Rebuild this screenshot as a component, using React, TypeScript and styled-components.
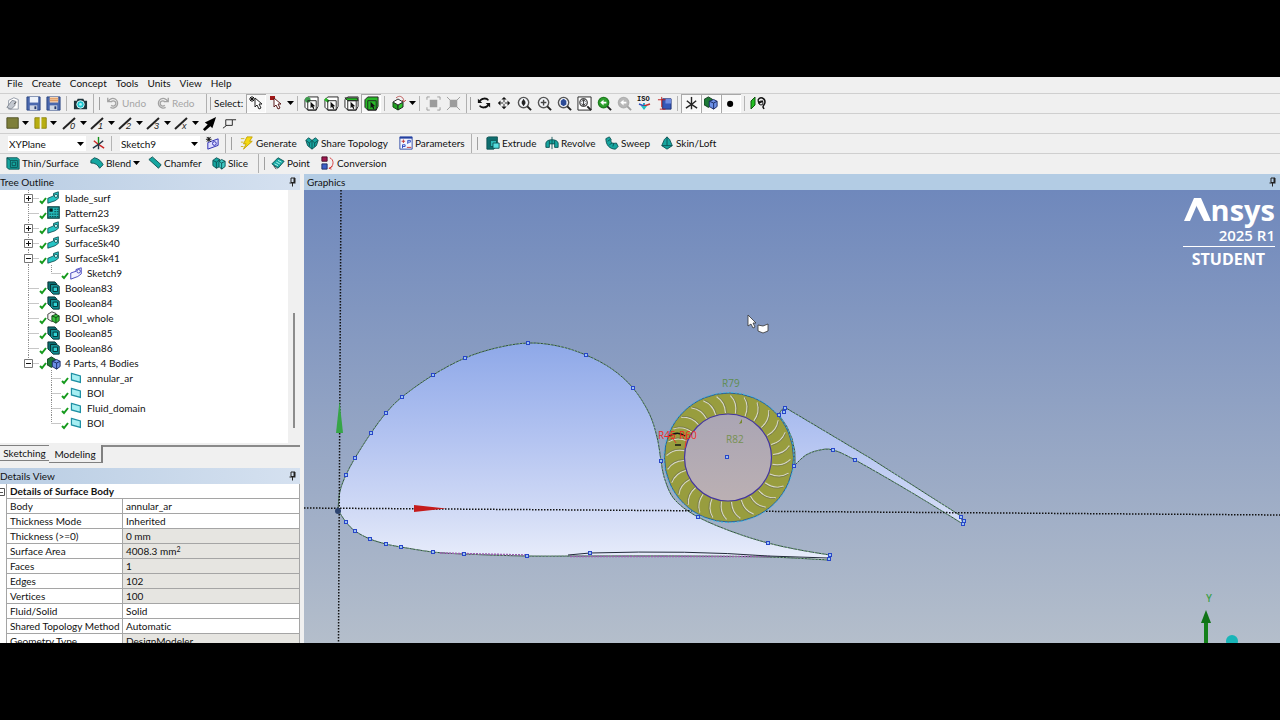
import React from "react";
import styled, { createGlobalStyle, css } from "styled-components";

const GlobalStyle = createGlobalStyle`
  * { box-sizing: border-box; }
  body {
    margin: 0;
    background: #000;
    color: #111;
    font-family: Lato, "Open Sans", sans-serif;
    font-size: 10px;
    line-height: 14px;
    font-variant-ligatures: none;
  }
  button, select, input { font: inherit; font-variant-ligatures: none; color: inherit; }
`;

const Page = styled.div`
  height: 100vh;
  padding: 77px 0;
  background: #000;
  overflow: hidden;
`;

const Window = styled.div`
  display: flex;
  flex-direction: column;
  height: 100%;
  background: #f0f0f0;
  overflow: hidden;
`;

/* ---------- menu and toolbars ---------- */

const MenuBar = styled.nav`
  display: flex;
  align-items: flex-start;
  gap: 9px;
  height: 16px;
  padding: 0 7px;
  flex: none;
`;

const MenuItem = styled.button`
  border: 0;
  padding: 0;
  background: none;
  line-height: 13px;
`;

const ToolRow = styled.div`
  display: flex;
  align-items: stretch;
  height: 20px;
  padding-left: 3px;
  flex: none;
  border-top: 1px solid #cfcfcf;
  white-space: nowrap;
`;

const ToolButton = styled.button<{ $w?: number; $inset?: boolean; $dim?: boolean }>`
  display: flex;
  align-items: center;
  justify-content: ${(p) => (p.$w ? "flex-start" : "center")};
  gap: 2px;
  width: ${(p) => p.$w ?? 20}px;
  padding: 0 0 1px ${(p) => (p.$w ? 3 : 0)}px;
  border: 0;
  background: none;
  flex: none;
  ${(p) => p.$dim && css`color: #a6a6a6;`}
  ${(p) =>
    p.$inset &&
    css`
      background: #f8f8f8;
      box-shadow: inset 1px 1px 0 #a8a8a8, inset -1px -1px 0 #fff;
    `}
  svg { flex: none; }
`;

const Divider = styled.span<{ $w?: number }>`
  width: ${(p) => p.$w ?? 7}px;
  margin: 2px 0;
  flex: none;
  background: linear-gradient(#b4b4b4, #b4b4b4) center / 1px 100% no-repeat;
`;

const BandEdge = styled.span<{ $w?: number; $after?: number }>`
  display: flex;
  width: ${(p) => p.$w ?? 7}px;
  margin: 0 ${(p) => p.$after ?? 3}px 0 3px;
  flex: none;
  border-left: 1px solid #b0b0b0;
  &::after {
    content: "";
    width: 1px;
    margin: 3px 0 3px auto;
    background: #a0a0a0;
  }
`;

const ToolLabel = styled.span`
  display: flex;
  align-items: center;
  width: 32px;
  padding-bottom: 1px;
`;

const Picker = styled.label<{ $w: number }>`
  position: relative;
  display: flex;
  width: ${(p) => p.$w}px;
  margin: 2px 2px 2px 5px;
  background: #fff;
  flex: none;
  select {
    appearance: none;
    width: 100%;
    border: 0;
    padding: 0 1px;
    background: none;
    line-height: 14px;
  }
  svg {
    position: absolute;
    right: 2px;
    top: 4px;
    pointer-events: none;
  }
`;

/* ---------- work area ---------- */

const Work = styled.div`
  display: flex;
  flex: 1;
  min-height: 0;
  margin-top: 1px;
`;

const Side = styled.aside`
  display: flex;
  flex-direction: column;
  width: 304px;
  padding-right: 4px;
  flex: none;
`;

const PanelHead = styled.header<{ $pad?: number }>`
  display: flex;
  justify-content: space-between;
  align-items: center;
  height: 16px;
  padding: 0 3px 0 ${(p) => p.$pad ?? 0}px;
  flex: none;
  background: linear-gradient(90deg, #b9cde3, #d5e1f0);
  h2 {
    margin: 0;
    font-size: 10px;
    font-weight: 400;
  }
`;

const TreeBox = styled.div`
  display: flex;
  flex: 1;
  min-height: 0;
  background: #fff;
`;

const TreeList = styled.ul`
  flex: 1;
  margin: 0;
  padding: 0;
  list-style: none;
  overflow: hidden;
`;

const TreeRow = styled.li`
  display: flex;
  align-items: center;
  height: 15px;
  svg { flex: none; }
  span { margin-left: 4px; white-space: nowrap; }
`;

const IconSlot = styled.i`
  display: flex;
  width: 14px;
  flex: none;
`;

const ScrollTrack = styled.div`
  display: flex;
  justify-content: center;
  width: 12px;
  padding: 123px 0 15px;
  background: #f0f0f0;
`;

const ScrollThumb = styled.div`
  width: 2px;
  background: #8c8c8c;
`;

const Tabs = styled.div`
  display: flex;
  align-items: flex-start;
  height: 25px;
  flex: none;
  padding-top: 2px;
`;

const Tab = styled.button<{ $on?: boolean }>`
  height: ${(p) => (p.$on ? 18 : 16)}px;
  width: ${(p) => (p.$on ? 54 : 49)}px;
  padding: 0;
  border: 0;
  border-bottom: 1px solid #808080;
  border-top: ${(p) => (p.$on ? "0" : "1px solid #808080")};
  border-right: ${(p) => (p.$on ? "2px solid #808080" : "0")};
  background: #f0f0f0;
  line-height: 14px;
`;

const TabRule = styled.span`
  flex: 1;
  border-top: 2px solid #8a8a8a;
`;

const Details = styled.div`
  height: 159px;
  overflow: hidden;
  background: #fff;
  flex: none;
`;

const Grid = styled.table`
  width: 100%;
  table-layout: fixed;
  border-collapse: separate;
  border-spacing: 0;
  col:nth-child(1) { width: 7px; }
  col:nth-child(2) { width: 116px; }
  th, td {
    height: 15px;
    padding: 0 3px;
    border-right: 1px solid #a5a5a5;
    border-bottom: 1px solid #a5a5a5;
    text-align: left;
    font-weight: 400;
    line-height: 14px;
    white-space: nowrap;
  }
  thead th { font-weight: 700; }
`;

const GutterCell = styled.td`
  && { padding: 0; border-bottom: 0; }
  svg { display: block; }
`;

const ValueCell = styled.td<{ $locked?: boolean }>`
  background: ${(p) => (p.$locked ? "#e6e5e1" : "#fff")};
  sup { font-size: 7px; line-height: 0; vertical-align: 3px; }
`;

const Graphics = styled.main`
  display: flex;
  flex-direction: column;
  flex: 1;
  min-width: 0;
`;

const GraphicsHead = styled(PanelHead)`
  padding-right: 3px;
  background: #b3cce4;
`;

const Viewport = styled.div`
  position: relative;
  flex: 1;
  min-height: 0;
  overflow: hidden;
  background: linear-gradient(#6f88bc, #b4becb);
  > svg { display: block; width: 100%; height: 100%; }
`;

const Brand = styled.div`
  position: absolute;
  top: 6px;
  right: 5px;
  display: flex;
  flex-direction: column;
  align-items: flex-end;
  width: 92px;
  color: #fff;
  font-family: "Open Sans", sans-serif;
  font-weight: 600;
`;

const Logo = styled.div`
  display: flex;
  align-items: flex-start;
  font-size: 29px;
  font-weight: 700;
  line-height: 28px;
  svg { margin-top: 2px; }
`;

const Release = styled.div`
  margin-top: 2px;
  font-size: 15px;
  line-height: 18px;
`;

const Edition = styled.div`
  width: 100%;
  margin-top: 2px;
  padding: 3px 10px 0 0;
  border-top: 1px solid #fff;
  font-size: 16px;
  line-height: 18px;
  text-align: right;
  font-weight: 700;
`;

/* ---------- icons ---------- */

const TEAL = "#16a6a0";
const DEEP = "#0b4f50";

const Svg = ({ s = 14, children }: { s?: number; children: React.ReactNode }) => (
  <svg width={s} height={s} viewBox="0 0 16 16" fill="none" aria-hidden="true">
    {children}
  </svg>
);

const Arrow = () => (
  <svg width="7" height="8" viewBox="0 0 7 8" aria-hidden="true">
    <path d="M0 2h7L3.500 6z" fill="#000" />
  </svg>
);

const Pin = () => (
  <svg width="9" height="10" viewBox="0 0 9 10" fill="none" aria-hidden="true">
    <path d="M3 1h4v4.500H3zM1.500 6h6M4.500 6v3.500" stroke="#222" />
    <path d="M5.500 1h1.500v5H5.500z" fill="#222" />
  </svg>
);

const NewIcon = () => (
  <Svg>
    <path d="M3 5l6-3 5 2v11H3z" fill="#fff" stroke="#8a92a0" />
    <path d="M1 13l6-8 4 1-1 5-4 4z" fill="#c3c8d0" stroke="#7f8691" />
    <path d="M9 9l3-2" stroke="#555" />
  </Svg>
);
const SaveIcon = ({ alt }: { alt?: boolean }) => (
  <Svg s={15}>
    <path d="M1 1h14v14H1z" fill="#4a68ae" stroke="#2b4582" />
    <path d="M4 1h9v6H4z" fill={alt ? "#f6d3b2" : "#edf2fa"} />
    {alt && <path d="M4 3h9M4 5h9" stroke="#d98a4a" />}
    <path d="M4 10h8v5H4z" fill="#cfd6e4" />
    <path d="M9 11h2v3H9z" fill="#24396c" />
  </Svg>
);
const CameraIcon = () => (
  <Svg s={15}>
    <path d="M1 5h3l1-2h6l1 2h3v9H1z" fill="#20343a" />
    <circle cx="8" cy="9" r="4" fill="#1fc8d2" stroke="#d8f6f8" />
    <circle cx="8" cy="9" r="1.500" fill="#aef4f7" />
  </Svg>
);
const TurnIcon = ({ flip }: { flip?: boolean }) => (
  <Svg>
    <g transform={flip ? "translate(16 0) scale(-1 1)" : undefined} stroke="#a2a2a2" strokeWidth="1.500">
      <path d="M3 5.500A5.500 5.500 0 1 1 5 13M2 2v4.500h5" />
      <path d="M6 6.500a3 3 0 1 1 0 4" />
    </g>
  </Svg>
);
const pointer = "M0 0v9l2-2 2 4 2-1-2-4h3z";
const PickNew = () => (
  <Svg s={16}>
    <path d="M4 1v6M1 4h6M2 2l4 4M6 2L2 6" stroke="#111" />
    <path d={pointer} transform="translate(7 3)" fill="#fff" stroke="#222" />
  </Svg>
);
const PickMode = () => (
  <Svg s={16}>
    <path d="M1 1h5v4H1z" fill="#a01818" />
    <path d={pointer} transform="translate(5 3)" fill="#fff" stroke="#5a1a1a" />
  </Svg>
);
const FilterIcon = ({ kind }: { kind: "point" | "edge" | "face" | "body" }) => {
  const g = "#28b828";
  return (
    <Svg s={15}>
      <path d="M1 4l3-3h11v10l-2 4H4l-3-3z" fill={kind === "body" ? g : "#fff"} stroke="#222" />
      {kind === "face" && <path d="M1 2h13l1 3H4z" fill={g} stroke="#222" />}
      {kind === "edge" && <path d="M1 3l4 3" stroke={g} strokeWidth="3" />}
      {kind === "point" && <circle cx="4" cy="4" r="3" fill="#3d9c4e" />}
      <path d="M4 5h9v10H4z" stroke="#222" />
      <path d="M7 6v7l1.500-1.500L10 14l1-1-1-2h2z" fill="#111" />
    </Svg>
  );
};
const ExtendIcon = () => (
  <Svg s={16}>
    <path d="M2 7l5 3v5l-5-3z" fill="#22a022" stroke="#115511" />
    <path d="M7 10l5-3v5l-5 3z" fill="#2fc22f" stroke="#222" />
    <path d="M2 7l5-3 5 3-5 3z" fill="#fff" stroke="#333" />
    <path d="M5 3c3-3 7-2 8 3M11 5l2 2 2-2" stroke="#c06060" />
  </Svg>
);
const GreyBox = ({ x }: { x?: boolean }) => (
  <Svg s={15}>
    <path d="M4 4h8v8H4z" fill="#9c9c9c" />
    <path d={x ? "M1 1l14 14M15 1L1 15" : "M1 4V1h3M12 1h3v3M15 12v3h-3M4 15H1v-3"} stroke="#9c9c9c" />
  </Svg>
);
const RotateIcon = () => (
  <Svg>
    <path d="M3 6c2-4 8-4 10-1M13 10c-2 4-8 4-10 1" stroke="#111" strokeWidth="2" />
    <path d="M1 3v5h5zM15 13V8h-5z" fill="#111" />
  </Svg>
);
const PanIcon = () => (
  <Svg>
    <path d="M8 1l3 3H5zM8 15l3-3H5zM1 8l3-3v6zM15 8l-3-3v6z" fill="#111" />
    <path d="M8 4v3M8 9v3M4 8h3M9 8h3" stroke="#111" />
  </Svg>
);
const Lens = ({ kind }: { kind: "zoom" | "plus" | "fit" | "box" | "prev" | "next" }) => {
  const rim = kind === "prev" ? "#1f7d1f" : kind === "next" ? "#b0b0b0" : "#555";
  const fill = kind === "prev" ? "#2da02d" : kind === "next" ? "#b8b8b8" : "#f4f6fa";
  return (
    <Svg s={15}>
      {kind === "box" && <path d="M1 1h14v14H1z" fill="#fff" stroke="#222" />}
      <circle cx="7" cy="7" r={kind === "box" ? 4 : 5.5} fill={fill} stroke={rim} strokeWidth="1.500" />
      <path d="M11 11l4 4" stroke={kind === "next" ? "#a0a0a0" : "#222"} strokeWidth="2" />
      {kind === "zoom" && <path d="M7 3l2 3H5zM7 11l2-3H5zM5 6h4v2H5z" fill="#222" />}
      {kind === "plus" && <path d="M7 4v6M4 7h6" stroke="#444" strokeWidth="1.500" />}
      {kind === "fit" && <path d="M4 5l3-2 3 2v4l-3 2-3-2z" fill="#2b4a96" />}
      {kind === "box" && <path d="M7 4v6M5 6l2-2 2 2M5 8l2 2 2-2" stroke="#333" />}
      {(kind === "prev" || kind === "next") && <path d="M3.500 7L7 4v2h3v2H7v2z" fill="#fff" />}
    </Svg>
  );
};
const IsoIcon = () => (
  <svg width="16" height="16" viewBox="0 0 16 16" fill="none" aria-hidden="true">
    <text x="1" y="6" fontSize="7" fontFamily="Liberation Mono" fontWeight="700" fill="#111">ISO</text>
    <path d="M8 14V8" stroke="#2aa0c8" strokeWidth="2" />
    <path d="M8 11l-5-2" stroke="#3050c0" strokeWidth="1.500" />
    <path d="M8 11l6-2" stroke="#c03030" strokeWidth="1.500" />
    <path d="M5 11h6l-3 4z" fill="#25c0c0" />
  </svg>
);
const LookIcon = () => (
  <Svg s={15}>
    <path d="M6 3h9v11H6z" fill="#3457b8" stroke="#1e2f70" />
    <path d="M9 3h6v5H9z" fill="#6f8ce0" />
    <path d="M5 1v11M1 4h8M3 14h6" stroke="#c02020" />
  </Svg>
);
const StarAxes = ({ color }: { color?: boolean }) => (
  <Svg s={15}>
    <path d="M8 1v8" stroke={color ? "#16901a" : "#222"} strokeWidth="1.500" />
    <path d="M8 9l6 4M3 5l5 4" stroke={color ? "#c22" : "#222"} strokeWidth="1.500" />
    <path d="M8 9l-6 4M13 5L8 9M8 9v5" stroke={color ? "#234" : "#222"} strokeWidth="1.500" />
  </Svg>
);
const PartsIcon = () => (
  <Svg>
    <path d="M0 4l5-3 5 3v6l-5 3-5-3z" fill="#1d7a36" stroke="#0b3216" />
    <path d="M6 6l5-2 4 2v6l-4 3-5-3z" fill="#6c8fe6" stroke="#16245c" />
    <path d="M6 6l5 2 4-2M11 8v7" stroke="#16245c" />
  </Svg>
);
const DotIcon = () => (
  <Svg>
    <circle cx="7" cy="9" r="3.500" fill="#000" />
  </Svg>
);
const GlassesIcon = () => (
  <Svg s={16}>
    <path d="M1 6l4-4v8l-4 4z" fill="#22c022" stroke="#115511" />
    <path d="M8 5c2-4 7-2 7 2 0 3-2 3-2 5l1 2M8 5l1 3 4-2" stroke="#111" strokeWidth="1.500" />
    <circle cx="11" cy="8" r="2" stroke="#111" />
  </Svg>
);
const ColorSwatch = ({ split }: { split?: boolean }) => (
  <Svg>
    <path d="M1 2h13v12H1z" fill={split ? "#b8ae10" : "#7e7f3a"} stroke={split ? "#8a8210" : "#4c4d22"} />
    {split && <path d="M7.500 1v14" stroke="#f0f0f0" strokeWidth="2" />}
  </Svg>
);
const WeightIcon = ({ tag }: { tag: string }) => (
  <svg width="16" height="16" viewBox="0 0 16 16" fill="none" aria-hidden="true">
    <path d="M1 14L13 3" stroke="#222" strokeWidth="2" />
    <text x="8" y="14" fontSize="9" fontStyle="italic" fontFamily="Liberation Sans" fill="#222">{tag}</text>
  </svg>
);
const BoldArrow = () => (
  <Svg s={15}>
    <path d="M1 14l5-5-3-2 12-6-4 12-2-2-6 5z" fill="#000" />
  </Svg>
);
const VertexIcon = () => (
  <Svg s={15}>
    <path d="M1 13l4-3M4 4h7v6H4zM11 4h4" stroke="#222" />
  </Svg>
);
const Bolt = () => (
  <Svg>
    <path d="M8 1h6l-3 5h3L4 15l3-6H4z" fill="#f4d910" stroke="#c2a000" />
    <path d="M1 3h4M1 7h3M1 12h3" stroke="#c9b210" />
  </Svg>
);
const SketchIcon = () => (
  <Svg>
    <path d="M2 8l6-2V4l6-2v7l-4 3-8 3z" fill="#f3f3ff" stroke="#3a3ab8" />
    <circle cx="11" cy="6" r="2" stroke="#3a3ab8" />
  </Svg>
);
const NewSketch = () => (
  <Svg s={15}>
    <path d="M3 7l11-4v7L3 14z" fill="#dcdcff" stroke="#2a2ab0" />
    <circle cx="10" cy="8" r="2" stroke="#2a2ab0" />
    <path d="M4 1v5M1 3.500h6M2 1l4 5M6 1L2 6" stroke="#111" />
  </Svg>
);
const ShareIcon = () => (
  <Svg>
    <path d="M1 5l3-3 4 3 4-3 3 3-2 6-5 4-5-4z" fill={TEAL} stroke={DEEP} />
    <path d="M1 5l4 3v4M15 5l-4 3v4M8 5v10M5 8l3-3 3 3" stroke={DEEP} />
  </Svg>
);
const ParamIcon = () => (
  <Svg>
    <path d="M1 1h14v14H1z" fill="#f3f6ff" stroke="#2440a0" />
    <path d="M1 1h14v2H1z" fill="#2440a0" />
    <path d="M3 6h4M5 4v4M9 13h5" stroke="#c02828" />
    <path d="M10 9V5h3v2h-3M4 14v-4h3v2H4" stroke="#2440c0" />
  </Svg>
);
const BoxIcon = () => (
  <Svg>
    <path d="M1 2l2-1h10v9l-4 5H1z" fill="#0f6f70" stroke={DEEP} />
    <path d="M5 5h7v7H5z" fill="#2db7b5" stroke={DEEP} />
    <path d="M8 8h7v6H8z" fill="#59dfe0" stroke={DEEP} />
  </Svg>
);
const RevolveIcon = () => (
  <Svg>
    <path d="M1 8c1-5 13-5 14 0v5h-4V9H5v4H1z" fill={TEAL} stroke={DEEP} />
    <path d="M8 1v14M5 5v4M11 5v4" stroke={DEEP} />
  </Svg>
);
const SweepIcon = () => (
  <Svg>
    <path d="M1 3l4-2 2 3c-1 4 2 5 6 4l2 4-3 3C5 15 1 10 1 3z" fill={TEAL} stroke={DEEP} />
    <path d="M3 6l3-2M5 10l3-2M9 12l1-4" stroke={DEEP} />
  </Svg>
);
const LoftIcon = () => (
  <Svg>
    <path d="M8 1l3 3 3 7-6 4-6-4 3-7z" fill={TEAL} stroke={DEEP} />
    <path d="M8 1v10l-6 0M8 11l6 0" stroke={DEEP} />
  </Svg>
);
const ThinIcon = () => (
  <Svg>
    <path d="M1 2h12l2 2v11H3l-2-2z" fill={TEAL} stroke={DEEP} />
    <path d="M5 5h8v8H5zM7 7h4v4H7z" stroke={DEEP} />
    <path d="M1 2l4 3" stroke={DEEP} />
  </Svg>
);
const BlendIcon = () => (
  <Svg>
    <path d="M1 5l4-3c5 1 8 4 10 8l-4 4c-2-4-5-6-10-6z" fill={TEAL} stroke={DEEP} />
  </Svg>
);
const ChamferIcon = () => (
  <Svg>
    <path d="M1 4l4-3 10 9-3 4z" fill={TEAL} stroke={DEEP} />
  </Svg>
);
const SliceIcon = () => (
  <Svg>
    <path d="M1 5l4-3 4 2v8l-4 2-4-3z" fill={TEAL} stroke={DEEP} />
    <path d="M8 6l3-2 4 2v6l-4 3-3-3z" fill="#3fc9c4" stroke={DEEP} />
    <path d="M1 5l4 2 4-3M5 7v7M8 6l3 2 4-2M11 8v7" stroke={DEEP} />
  </Svg>
);
const PointIcon = () => (
  <Svg>
    <path d="M1 9l7-7 7 4-7 8z" fill={TEAL} stroke={DEEP} />
    <path d="M4 9l4 2M6 7l4 2M8 5l4 2" stroke="#c5fbfb" />
    <path d="M3 11l3 4" stroke="#222" />
  </Svg>
);
const ConvertIcon = () => (
  <Svg>
    <path d="M1 1h6v5H1z" fill="#a01850" stroke="#400a20" />
    <path d="M1 9h6v6H1z" fill="#3c5fc8" stroke="#18285c" />
    <path d="M10 2c5 2 5 9 0 12M13 12l-4 2 3 1" stroke="#d03030" />
  </Svg>
);
const SurfaceIcon = () => (
  <Svg s={13}>
    <path d="M1 9l7-3V3l6-2v8l-4 3-9 3z" fill="#25c4c4" stroke="#0a4a4c" />
    <circle cx="11" cy="6" r="2" fill="#c6f6f6" stroke="#0a4a4c" />
  </Svg>
);
const PatternIcon = () => (
  <Svg s={13}>
    <path d="M1 1h14v14H1z" fill="#25b9b9" stroke="#063c3e" strokeWidth="1.500" />
    <path d="M3 3h4v4H3z" fill="#04191a" />
    <path d="M9 4h5M9 7h5M3 10h11M3 13h11" stroke="#053032" strokeDasharray="2 1" />
  </Svg>
);
const BooleanIcon = () => (
  <Svg s={14}>
    <path d="M1 1h8l2 2v8H3L1 9z" fill="#0c6d70" stroke="#03292b" />
    <path d="M4 4h7l3 2v9H7l-3-3z" fill="#159195" stroke="#03292b" />
    <path d="M7 7h5v5H7z" fill="#31d2d4" stroke="#03292b" />
  </Svg>
);
const WholeIcon = () => (
  <Svg s={13}>
    <path d="M1 4l5-3 5 2v7l-5 3-5-3z" fill="#f4f4f4" stroke="#222" />
    <path d="M6 6l5-2 4 2v6l-4 3-5-3z" fill="#37bf3c" stroke="#0d3a10" />
    <path d="M6 6l5 2 4-2M11 8v7" stroke="#0d3a10" />
  </Svg>
);
const SheetIcon = () => (
  <Svg s={13}>
    <path d="M3 3l11 3v8L3 11z" fill="#a5eef2" stroke="#1d8fa3" strokeWidth="1.500" />
  </Svg>
);

/* ---------- tree ---------- */

type Node = {
  label: string;
  icon: React.ReactNode;
  level: 1 | 2;
  box?: "+" | "-";
  through?: boolean;
  last?: boolean;
};

const nodes: Node[] = [
  { label: "blade_surf", icon: <SurfaceIcon />, level: 1, box: "+" },
  { label: "Pattern23", icon: <PatternIcon />, level: 1 },
  { label: "SurfaceSk39", icon: <SurfaceIcon />, level: 1, box: "+" },
  { label: "SurfaceSk40", icon: <SurfaceIcon />, level: 1, box: "+" },
  { label: "SurfaceSk41", icon: <SurfaceIcon />, level: 1, box: "-" },
  { label: "Sketch9", icon: <SketchIcon />, level: 2, through: true, last: true },
  { label: "Boolean83", icon: <BooleanIcon />, level: 1 },
  { label: "Boolean84", icon: <BooleanIcon />, level: 1 },
  { label: "BOI_whole", icon: <WholeIcon />, level: 1 },
  { label: "Boolean85", icon: <BooleanIcon />, level: 1 },
  { label: "Boolean86", icon: <BooleanIcon />, level: 1 },
  { label: "4 Parts, 4 Bodies", icon: <PartsIcon />, level: 1, box: "-", last: true },
  { label: "annular_ar", icon: <SheetIcon />, level: 2 },
  { label: "BOI", icon: <SheetIcon />, level: 2 },
  { label: "Fluid_domain", icon: <SheetIcon />, level: 2 },
  { label: "BOI", icon: <SheetIcon />, level: 2, last: true },
];

const Branch = ({ node }: { node: Node }) => {
  const w = node.level === 1 ? 47 : 69;
  const x = node.level === 1 ? 28.5 : 51.5;
  return (
    <svg width={w} height="15" viewBox={`0 0 ${w} 15`} fill="none" aria-hidden="true">
      <g stroke="#8e8e8e" strokeDasharray="1 1">
        {node.through && <path d="M28.500 0v15" />}
        <path d={`M${x} 0v${node.last ? 8 : 15}`} />
        <path d={`M${x} 8.500h${w - x - 8}`} />
      </g>
      {node.box && (
        <>
          <path d="M24.500 4.500h8v8h-8z" fill="#fff" stroke="#777" />
          <path d={node.box === "+" ? "M26 8.500h5M28.500 6v5" : "M26 8.500h5"} stroke="#111" />
        </>
      )}
      <path d={`M${w - 7} 11l2 2 4-5`} stroke="#159a1c" strokeWidth="2" />
    </svg>
  );
};

/* ---------- details ---------- */

const details: { name: string; value: React.ReactNode; locked?: boolean }[] = [
  { name: "Body", value: "annular_ar" },
  { name: "Thickness Mode", value: "Inherited" },
  { name: "Thickness (>=0)", value: "0 mm", locked: true },
  { name: "Surface Area", value: <>4008.3 mm<sup>2</sup></>, locked: true },
  { name: "Faces", value: "1", locked: true },
  { name: "Edges", value: "102", locked: true },
  { name: "Vertices", value: "100", locked: true },
  { name: "Fluid/Solid", value: "Solid" },
  { name: "Shared Topology Method", value: "Automatic" },
  { name: "Geometry Type", value: "DesignModeler", locked: true },
];

/* ---------- model drawing ---------- */

type Pt = [number, number];

/* Catmull-Rom spline through the points, as cubic segments. */
const spline = (pts: Pt[]) =>
  pts
    .slice(1)
    .map((p, i) => {
      const a = pts[Math.max(i - 1, 0)];
      const b = pts[i];
      const c = pts[Math.min(i + 2, pts.length - 1)];
      const c1 = [b[0] + (p[0] - a[0]) / 6, b[1] + (p[1] - a[1]) / 6];
      const c2 = [p[0] - (c[0] - b[0]) / 6, p[1] - (c[1] - b[1]) / 6];
      return `C${c1.join(" ")} ${c2.join(" ")} ${p.join(" ")}`;
    })
    .join("");

const upper: Pt[] = [
  [338, 510], [340, 491], [346, 475], [355, 458], [371, 433], [386, 413], [402, 397], [433, 375],
  [465, 358], [496, 348], [528, 343], [558, 346], [586, 355], [612, 369], [633, 388], [649, 413], [657, 437], [661, 461],
];
const throat: Pt[] = [[661, 461], [665, 480], [675, 500], [698, 517], [733, 532], [768, 543], [800, 550], [830, 555]];
const lower: Pt[] = [
  [829, 560], [768, 557], [680, 556], [590, 556], [527, 556], [464, 554], [433, 552], [401, 547],
  [386, 544], [370, 539], [355, 531], [346, 522], [338, 510],
];
const wingLower: Pt[] = [[963, 524], [909, 491], [855, 460], [833, 450], [820, 450], [806, 455], [795, 465]];

const bodyPath = `M338 510${spline(upper)}${spline(throat)}L829 560${spline(lower)}Z`;
const wingPath = `M779 415Q781 408 786 408L870 458L961 516L963 524${spline(wingLower)}Q797 437 779 415Z`;

const markers: Pt[] = [
  [346, 475], [355, 458], [371, 433], [386, 413], [402, 397], [433, 375], [465, 358], [528, 343], [586, 355],
  [633, 388], [661, 461], [698, 517], [768, 543], [830, 555], [829, 559], [590, 553], [527, 556], [464, 554],
  [433, 552], [401, 547], [386, 544], [370, 539], [355, 531], [346, 522], [779, 415], [785, 408], [784, 412],
  [794, 466], [833, 450], [855, 460], [961, 517], [964, 521], [963, 524], [727, 457],
];

const BLADES = 28;

const Model = () => (
  <svg viewBox="304 190 976 453" preserveAspectRatio="xMinYMin meet" fill="none" role="img" aria-label="Model">
    <defs>
      <linearGradient id="skin" gradientUnits="userSpaceOnUse" x1="0" y1="343" x2="0" y2="560">
        <stop offset="0" stopColor="#8ea8e8" />
        <stop offset="0.45" stopColor="#b4c4f1" />
        <stop offset="0.8" stopColor="#d3dcf6" />
        <stop offset="1" stopColor="#e8edfb" />
      </linearGradient>
      <linearGradient id="hub" x1="0" y1="0" x2="0" y2="1">
        <stop offset="0" stopColor="#aaa5b4" />
        <stop offset="1" stopColor="#bbb0b3" />
      </linearGradient>
    </defs>

    <path d={bodyPath} fill="url(#skin)" stroke="#2f4a45" />
    <path d={bodyPath} stroke="#7fb283" strokeDasharray="1.500 2" />
    <path d={wingPath} fill="url(#skin)" stroke="#2f4a45" />
    <path d={wingPath} stroke="#7fb283" strokeDasharray="1.500 2" />
    <path d="M440 553L527 555M570 556.500H770" stroke="#9a5fae" strokeWidth="1.500" strokeDasharray="2 1" />
    <path d="M568 555L590 553Q690 550 768 556L828 558" stroke="#222b3a" />

    <path d="M341 190L338.500 643" stroke="#111" strokeWidth="1.500" strokeDasharray="1.500 1.500" />
    <path d="M304 508L1280 515" stroke="#111" strokeWidth="1.500" strokeDasharray="1.500 1.500" />
    <path d="M339.500 401L343 433H336z" fill="#36a547" />
    <path d="M414 505l32 3.500-32 3.500z" fill="#c51b1b" />
    <circle cx="338" cy="511" r="3" fill="#2c4470" />

    <circle cx="729" cy="457.500" r="64.500" fill="#989d3e" stroke="#2b5e96" />
    <circle cx="729" cy="457.500" r="65" stroke="#37b8e6" strokeDasharray="2 2" />
    {Array.from({ length: BLADES }, (_, i) => (
      <g key={i} transform={`translate(728.500 457.500) rotate(${(360 / BLADES) * i})`}>
        <path d="M2 -62Q9 -55 7 -44" stroke="#d6d6c6" strokeWidth="1.300" />
        <path d="M3 -62Q10 -55 8 -44" stroke="#6f734c" strokeWidth="0.700" />
      </g>
    ))}
    <circle cx="728" cy="457.500" r="43.500" fill="url(#hub)" stroke="#4335a0" strokeWidth="1.200" />

    {markers.map(([x, y]) => (
      <rect key={`${x}-${y}`} x={x - 1.5} y={y - 1.5} width="3" height="3" fill="#9cc4f0" stroke="#2846c8" />
    ))}
    <path d="M668 437q9-7 17-1M675 445h6" stroke="#151515" strokeWidth="1.500" />
    <path d="M670 434l6 9M687 434l-2 14" stroke="#e63a2e" />
    <g fontFamily="Open Sans, sans-serif" fontSize="10">
      <text x="722" y="387" fill="#5f8d50">R79</text>
      <text x="726" y="443" fill="#769151">R82</text>
      <g fill="#f02a22">
        <text x="658" y="439">R45</text>
        <text x="679" y="439">R60</text>
      </g>
      <text x="1206" y="602" fill="#3fa04a" fontWeight="600">Y</text>
    </g>
    <path d="M739 424l3-5v4z" fill="#76862c" />

    <path d="M748 315v11l3-2 2 4 2-1-2-4h3z" fill="#fff" stroke="#333" strokeWidth="0.800" />
    <path d="M758 325l5 1 5-2v7l-5 2-5-2z" fill="#fff" stroke="#333" strokeWidth="0.800" />

    <path d="M1204 643v-22h4v22z" fill="#14801a" />
    <path d="M1206 610l5 13h-10z" fill="#0f7316" />
    <circle cx="1232" cy="641" r="6" fill="#19b5b8" />
  </svg>
);

/* ---------- app ---------- */

const Btn = ({ name, icon, ...rest }: { name: string; icon: React.ReactNode; $inset?: boolean }) => (
  <ToolButton type="button" aria-label={name} {...rest}>{icon}</ToolButton>
);

const TextBtn = ({ w, icon, text, dim, arrow }: { w: number; icon: React.ReactNode; text: string; dim?: boolean; arrow?: boolean }) => (
  <ToolButton type="button" $w={w} $dim={dim} disabled={dim}>
    {icon}
    <span>{text}</span>
    {arrow && <Arrow />}
  </ToolButton>
);

const DropBtn = ({ name, icon }: { name: string; icon: React.ReactNode }) => (
  <ToolButton type="button" $w={28} aria-label={name}>
    {icon}
    <Arrow />
  </ToolButton>
);

export default function App() {
  return (
    <Page>
      <GlobalStyle />
      <Window>
        <MenuBar>
          {["File", "Create", "Concept", "Tools", "Units", "View", "Help"].map((m) => (
            <MenuItem key={m} type="button">{m}</MenuItem>
          ))}
        </MenuBar>

        <ToolRow>
          <Btn name="New" icon={<NewIcon />} />
          <Btn name="Save" icon={<SaveIcon />} />
          <Btn name="Save as" icon={<SaveIcon alt />} />
          <Divider />
          <Btn name="Snapshot" icon={<CameraIcon />} />
          <BandEdge />
          <TextBtn w={50} icon={<TurnIcon />} text="Undo" dim />
          <TextBtn w={50} icon={<TurnIcon flip />} text="Redo" dim />
          <BandEdge $w={5} />
          <ToolLabel>Select:</ToolLabel>
          <Btn name="New selection" icon={<PickNew />} $inset />
          <DropBtn name="Select mode" icon={<PickMode />} />
          <Divider />
          <Btn name="Points" icon={<FilterIcon kind="point" />} />
          <Btn name="Edges" icon={<FilterIcon kind="edge" />} />
          <Btn name="Faces" icon={<FilterIcon kind="face" />} />
          <Btn name="Bodies" icon={<FilterIcon kind="body" />} $inset />
          <Divider />
          <DropBtn name="Extend selection" icon={<ExtendIcon />} />
          <Divider />
          <Btn name="Expand" icon={<GreyBox />} />
          <Btn name="Shrink" icon={<GreyBox x />} />
          <BandEdge $w={5} />
          <Btn name="Rotate" icon={<RotateIcon />} />
          <Btn name="Pan" icon={<PanIcon />} />
          <Btn name="Zoom" icon={<Lens kind="zoom" />} />
          <Btn name="Zoom in" icon={<Lens kind="plus" />} />
          <Btn name="Zoom to fit" icon={<Lens kind="fit" />} />
          <Btn name="Box zoom" icon={<Lens kind="box" />} />
          <Btn name="Previous view" icon={<Lens kind="prev" />} />
          <Btn name="Next view" icon={<Lens kind="next" />} />
          <Btn name="Isometric" icon={<IsoIcon />} />
          <Btn name="Look at" icon={<LookIcon />} />
          <Divider />
          <Btn name="Plane" icon={<StarAxes />} $inset />
          <Btn name="Model" icon={<PartsIcon />} $inset />
          <Btn name="Show points" icon={<DotIcon />} $inset />
          <Divider />
          <Btn name="Inspect" icon={<GlassesIcon />} />
        </ToolRow>

        <ToolRow>
          <DropBtn name="Face color" icon={<ColorSwatch />} />
          <DropBtn name="Edge color" icon={<ColorSwatch split />} />
          {["0", "1", "2", "3", "x"].map((t) => (
            <DropBtn key={t} name={`Edge ${t}`} icon={<WeightIcon tag={t} />} />
          ))}
          <Btn name="Direction" icon={<BoldArrow />} />
          <Btn name="Vertex" icon={<VertexIcon />} />
        </ToolRow>

        <ToolRow>
          <Picker $w={78}>
            <select aria-label="Plane"><option>XYPlane</option></select>
            <Arrow />
          </Picker>
          <Btn name="New plane" icon={<StarAxes color />} />
          <Divider />
          <Picker $w={80}>
            <select aria-label="Sketch"><option>Sketch9</option></select>
            <Arrow />
          </Picker>
          <Btn name="New sketch" icon={<NewSketch />} />
          <BandEdge $after={5} />
          <TextBtn w={65} icon={<Bolt />} text="Generate" />
          <TextBtn w={94} icon={<ShareIcon />} text="Share Topology" />
          <TextBtn w={72} icon={<ParamIcon />} text="Parameters" />
          <BandEdge $after={5} />
          <TextBtn w={59} icon={<BoxIcon />} text="Extrude" />
          <TextBtn w={60} icon={<RevolveIcon />} text="Revolve" />
          <TextBtn w={55} icon={<SweepIcon />} text="Sweep" />
          <TextBtn w={60} icon={<LoftIcon />} text="Skin/Loft" />
        </ToolRow>

        <ToolRow>
          <TextBtn w={84} icon={<ThinIcon />} text="Thin/Surface" />
          <TextBtn w={58} icon={<BlendIcon />} text="Blend" arrow />
          <TextBtn w={64} icon={<ChamferIcon />} text="Chamfer" />
          <TextBtn w={46} icon={<SliceIcon />} text="Slice" />
          <BandEdge />
          <TextBtn w={50} icon={<PointIcon />} text="Point" />
          <TextBtn w={70} icon={<ConvertIcon />} text="Conversion" />
        </ToolRow>

        <Work>
          <Side>
            <PanelHead>
              <h2>Tree Outline</h2>
              <Pin />
            </PanelHead>
            <TreeBox>
              <TreeList>
                {nodes.map((n, i) => (
                  <TreeRow key={i}>
                    <Branch node={n} />
                    <IconSlot>{n.icon}</IconSlot>
                    <span>{n.label}</span>
                  </TreeRow>
                ))}
              </TreeList>
              <ScrollTrack>
                <ScrollThumb />
              </ScrollTrack>
            </TreeBox>
            <Tabs>
              <Tab type="button">Sketching</Tab>
              <Tab type="button" $on>Modeling</Tab>
              <TabRule />
            </Tabs>
            <PanelHead>
              <h2>Details View</h2>
              <Pin />
            </PanelHead>
            <Details>
              <Grid>
                <colgroup>
                  <col />
                  <col />
                  <col />
                </colgroup>
                <thead>
                  <tr>
                    <GutterCell>
                      <svg width="6" height="14" viewBox="0 0 6 14" fill="none" aria-hidden="true">
                        <path d="M0 3.500h4.500v7H0M0 7.500h3" stroke="#555" />
                      </svg>
                    </GutterCell>
                    <th colSpan={2}>Details of Surface Body</th>
                  </tr>
                </thead>
                <tbody>
                  {details.map((d) => (
                    <tr key={d.name}>
                      <GutterCell />
                      <th scope="row">{d.name}</th>
                      <ValueCell $locked={d.locked}>{d.value}</ValueCell>
                    </tr>
                  ))}
                </tbody>
              </Grid>
            </Details>
          </Side>

          <Graphics>
            <GraphicsHead $pad={3}>
              <h2>Graphics</h2>
              <Pin />
            </GraphicsHead>
            <Viewport>
              <Model />
              <Brand>
                <Logo aria-label="Ansys">
                  <svg width="27" height="23" viewBox="0 0 27 23" aria-hidden="true">
                    <path d="M0 23L10 0h6L6 23z" fill="#fff" />
                    <path d="M12 7l3-7h2l10 23h-7z" fill="#fff" />
                  </svg>
                  nsys
                </Logo>
                <Release>2025 R1</Release>
                <Edition>STUDENT</Edition>
              </Brand>
            </Viewport>
          </Graphics>
        </Work>
      </Window>
    </Page>
  );
}
